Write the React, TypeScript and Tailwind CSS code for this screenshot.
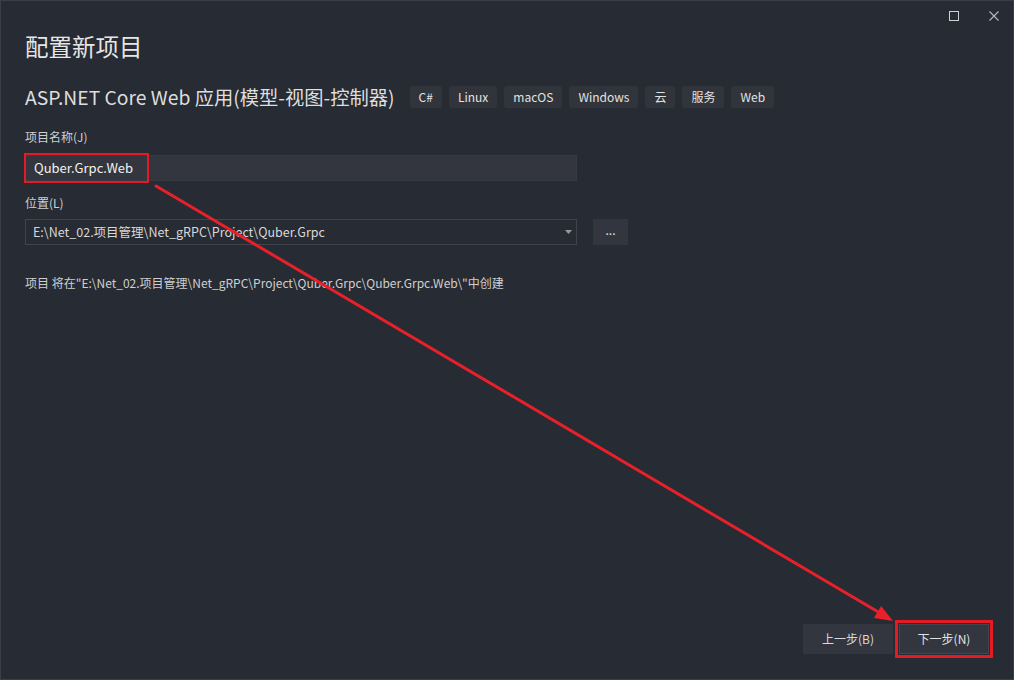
const FONT = "font-['Noto_Sans_CJK_SC','Noto_Sans',sans-serif]";

const tags = ["C#", "Linux", "macOS", "Windows", "云", "服务", "Web"];

function Tag({ label }: { label: string }) {
  return (
    <span className="flex h-[22px] items-center rounded-[3px] bg-[#31343a] px-[9px] text-[12px] text-[#e2e2e2]">
      {label}
    </span>
  );
}

function Arrow() {
  return (
    <svg className="pointer-events-none absolute left-0 top-0" width="1014" height="680" viewBox="0 0 1014 680">
      <line x1="155" y1="185" x2="879" y2="612" stroke="#e8202a" strokeWidth="3" strokeLinecap="round" />
      <polygon points="892,620 872.9,616.9 880.1,604.9" fill="#e8202a" />
    </svg>
  );
}

export default function App() {
  return (
    <div className={`relative flex h-[680px] w-[1014px] flex-col overflow-hidden border border-[#3a3e46] bg-[#272b33] ${FONT}`}>
      {/* title bar */}
      <div className="flex h-[29px] shrink-0 items-center justify-end gap-[30px] pr-[14px]">
        <span className="h-[10px] w-[10px] border border-[#cfd0d3]" />
        <svg width="10" height="10" viewBox="0 0 10 10">
          <path d="M0.5 0.5 L9.5 9.5 M9.5 0.5 L0.5 9.5" stroke="#b9babd" strokeWidth="1.1" />
        </svg>
      </div>

      <div className="flex flex-col px-[24px]">
        <h1 className="text-[23.5px] leading-[32px] text-[#e6e6e6]">配置新项目</h1>

        <div className="mt-[21px] flex h-[28px] items-center">
          <span className="text-[19.3px] leading-[28px] text-[#dedede]">ASP.NET Core Web 应用(模型-视图-控制器)</span>
          <div className="ml-[15px] flex items-center gap-[7px]">
            {tags.map((t) => (
              <Tag key={t} label={t} />
            ))}
          </div>
        </div>

        <label className="mt-[17px] text-[12px] leading-[18px] text-[#d0d0d0]">项目名称(J)</label>
        <div className="relative mt-[9px] h-[26px] w-[552px]">
          <div className="flex h-full items-center border border-[#383b43] bg-[#33363e] pl-[8px] text-[13px] text-[#f2f2f2]">
            Quber.Grpc.Web
          </div>
          <div className="absolute left-[-1px] top-[-2px] h-[30px] w-[125px] border-2 border-[#e51a24]" />
        </div>

        <label className="mt-[13px] text-[12px] leading-[18px] text-[#d0d0d0]">位置(L)</label>
        <div className="mt-[7px] flex items-center gap-[16px]">
          <div className="flex h-[26px] w-[552px] items-center justify-between border border-[#41444c] bg-[#272b33] pl-[7px] pr-[4px] text-[12.5px] text-[#d8d8d8]">
            <span>E:\Net_02.项目管理\Net_gRPC\Project\Quber.Grpc</span>
            <svg width="7" height="4" viewBox="0 0 7 4">
              <path d="M0 0 L7 0 L3.5 4 Z" fill="#9a9a9a" />
            </svg>
          </div>
          <button className="flex h-[26px] w-[35px] items-center justify-center bg-[#33363e] pb-[4px] text-[12px] text-[#e0e0e0]">
            ...
          </button>
        </div>

        <p className="mt-[29px] text-[12px] leading-[18px] text-[#cfcfcf]">
          项目 将在"E:\Net_02.项目管理\Net_gRPC\Project\Quber.Grpc\Quber.Grpc.Web\"中创建
        </p>
      </div>

      <div className="flex-1" />

      <div className="flex justify-end gap-[6px] pb-[25px] pr-[24px]">
        <button className="flex h-[30px] w-[90px] items-center justify-center bg-[#33363e] text-[12px] text-[#d8d8d8]">
          上一步(B)
        </button>
        <div className="relative">
          <button className="flex h-[30px] w-[90px] items-center justify-center border border-[#43464e] bg-[#33363e] text-[12px] text-[#e2e2e2]">
            下一步(N)
          </button>
          <div className="absolute -inset-[4px] border-[3px] border-[#e51a24]" />
        </div>
      </div>

      <Arrow />
    </div>
  );
}
